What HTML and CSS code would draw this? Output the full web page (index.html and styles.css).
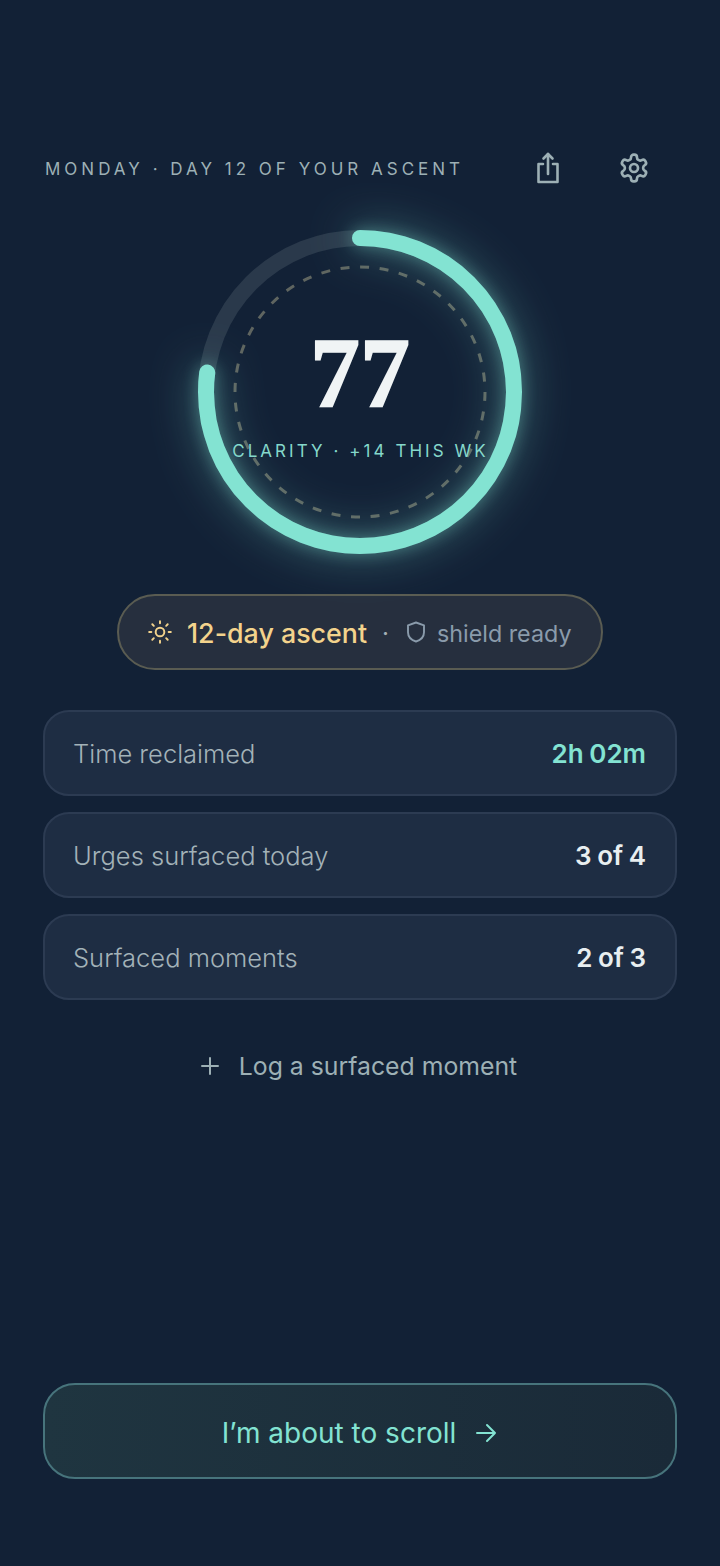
FILE: index.html
```html
<!DOCTYPE html>
<html>
<head>
<meta charset="utf-8">
<title>Ascent</title>
<link rel="stylesheet" href="styles.css">
</head>
<body>
<div class="screen">
	<div class="top">
		<span class="date">MONDAY · DAY 12 OF YOUR ASCENT</span>
		<div class="top-icons">
			<svg class="ico" width="30" height="34" viewBox="0 0 30 34" fill="none" stroke="#9db0b5" stroke-width="2.6" stroke-linecap="round" stroke-linejoin="round"><path d="M10 13H5.500v18h19V13H20"/><path d="M15 23V3"/><path d="M10.500 7.500L15 3l4.500 4.500"/></svg>
			<svg class="ico" width="32" height="32" viewBox="0 0 24 24" fill="none" stroke="#9db0b5" stroke-width="2" stroke-linecap="round" stroke-linejoin="round"><path d="M12.220 2h-.440a2 2 0 0 0-2 2v.180a2 2 0 0 1-1 1.730l-.430.250a2 2 0 0 1-2 0l-.150-.080a2 2 0 0 0-2.730.730l-.220.380a2 2 0 0 0 .730 2.730l.150.100a2 2 0 0 1 1 1.720v.510a2 2 0 0 1-1 1.740l-.150.090a2 2 0 0 0-.730 2.730l.220.380a2 2 0 0 0 2.730.730l.150-.080a2 2 0 0 1 2 0l.430.250a2 2 0 0 1 1 1.730V20a2 2 0 0 0 2 2h.440a2 2 0 0 0 2-2v-.180a2 2 0 0 1 1-1.730l.430-.250a2 2 0 0 1 2 0l.150.080a2 2 0 0 0 2.730-.730l.220-.390a2 2 0 0 0-.730-2.730l-.150-.080a2 2 0 0 1-1-1.740v-.500a2 2 0 0 1 1-1.740l.150-.090a2 2 0 0 0 .730-2.730l-.220-.380a2 2 0 0 0-2.730-.730l-.150.080a2 2 0 0 1-2 0l-.430-.250a2 2 0 0 1-1-1.730V4a2 2 0 0 0-2-2z"/><circle cx="12" cy="12" r="3"/></svg>
		</div>
	</div>

	<div class="ring">
		<svg class="ring-svg" width="400" height="400" viewBox="0 0 400 400" fill="none">
			<circle cx="200" cy="200" r="125" stroke="#5f6560" stroke-width="3" stroke-dasharray="9 10.630"/>
			<circle cx="200" cy="200" r="154" stroke="#2a394b" stroke-width="16"/>
			<circle class="ring-arc" cx="200" cy="200" r="154" stroke="#83e3d2" stroke-width="16" stroke-linecap="round" stroke-dasharray="745 968" transform="rotate(-90 200 200)"/>
		</svg>
		<div class="ring-text">
			<div class="score">77</div>
			<div class="clarity">CLARITY · +14 THIS WK</div>
		</div>
	</div>

	<div class="pill">
		<svg width="26" height="26" viewBox="0 0 24 24" fill="none" stroke="#f3d38c" stroke-width="1.800" stroke-linecap="round"><circle cx="12" cy="12" r="4"/><path d="M12 2v2M12 20v2M4.900 4.900l1.400 1.400M17.700 17.700l1.400 1.400M2 12h2M20 12h2M6.300 17.700l-1.400 1.400M19.100 4.900l-1.400 1.400"/></svg>
		<span class="streak">12-day ascent</span>
		<span class="sep">·</span>
		<svg width="22" height="24" viewBox="0 0 22 24" fill="none" stroke="#8a9bab" stroke-width="1.900" stroke-linejoin="round"><path d="M11 2.500l8 2.800v7c0 4.700-3.400 7.800-8 9.200-4.600-1.400-8-4.500-8-9.200v-7z"/></svg>
		<span class="shield">shield ready</span>
	</div>

	<div class="rows">
		<div class="row"><span class="row-label">Time reclaimed</span><span class="row-val teal">2h 02m</span></div>
		<div class="row"><span class="row-label">Urges surfaced today</span><span class="row-val">3 of 4</span></div>
		<div class="row"><span class="row-label">Surfaced moments</span><span class="row-val">2 of 3</span></div>
	</div>

	<div class="log">
		<svg width="20" height="20" viewBox="0 0 20 20" fill="none" stroke="#9db0b5" stroke-width="2" stroke-linecap="round"><path d="M10 2v16M2 10h16"/></svg>
		<span>Log a surfaced moment</span>
	</div>

	<div class="cta">
		<span>I’m about to scroll</span>
		<svg width="24" height="24" viewBox="0 0 24 24" fill="none" stroke="#83e3d2" stroke-width="2" stroke-linecap="round" stroke-linejoin="round"><path d="M3 12h18M13 4l8 8-8 8"/></svg>
	</div>
</div>
</body>
</html>
```

FILE: styles.css
```css
*{margin:0; padding:0; box-sizing:border-box;}
body{background:#122136; font-family:"Inter","Noto Sans",sans-serif;}
.screen{width:720px; height:1566px; padding:0 43px 87px; display:flex; flex-direction:column; overflow:hidden;}

.top{display:flex; align-items:center; justify-content:space-between; height:50px; margin-top:143px; padding:0 27px 0 2px;}
.date{font-size:17px; letter-spacing:4px; color:#9db0b5; padding-top:2px;}
.top-icons{display:flex; align-items:center; gap:55px;}
.ico{display:block;}

.ring{position:relative; width:400px; height:400px; margin:-1px auto 0; align-self:center;}
.ring-svg{display:block; overflow:visible;}
.ring-arc{filter:drop-shadow(0 0 8px rgba(131,227,210,.4)) drop-shadow(0 0 22px rgba(131,227,210,.45));}
.ring-text{position:absolute; left:0; right:0; top:0; bottom:0; display:flex; flex-direction:column; align-items:center; padding-top:126px;}
.score{font-family:"Liberation Serif",serif; font-weight:700; font-size:100px; line-height:110px; color:#f0f4f5; -webkit-text-stroke:1.500px #f0f4f5;}
.clarity{font-size:17px; letter-spacing:3.050px; color:#85d8cb; margin-top:13px; padding-left:1px; white-space:nowrap;}

.pill{display:flex; align-items:center; align-self:center; width:486px; height:76px; margin-top:2px; padding-left:28px; background:#262f3e; border:2px solid #5a5c52; border-radius:38px;}
.streak{font-size:26.800px; font-weight:500; color:#f3d38c; margin-left:14px; padding-top:2px;}
.sep{font-size:24px; color:#a4afb5; margin:0 16px 0 15px; padding-top:2px;}
.shield{font-size:23.300px; color:#8a9bab; margin-left:10px; padding-top:2px;}

.rows{display:flex; flex-direction:column; gap:16px; margin-top:40px;}
.row{display:flex; align-items:center; justify-content:space-between; height:86px; padding:0 29px 0 28px; background:#1e2d43; border:2px solid #2c3b52; border-radius:26px;}
.row-label{font-size:25.500px; font-weight:300; color:#a3b2b8;}
.row-val{font-size:26px; font-weight:600; word-spacing:-1px; color:#e8eef0;}
.teal{color:#83e3d2;}

.log{display:flex; align-items:center; justify-content:center; gap:19px; margin-top:46px; height:40px; padding-right:3px; font-size:24.800px; color:#9db0b5;}

.cta{display:flex; align-items:center; justify-content:center; gap:18px; margin-top:auto; height:96px; padding-top:3px; font-size:28px; font-weight:400; color:#83e3d2; background:linear-gradient(90deg,#1f3540,#1a2a38); border:2px solid #47747c; border-radius:32px;}
```
